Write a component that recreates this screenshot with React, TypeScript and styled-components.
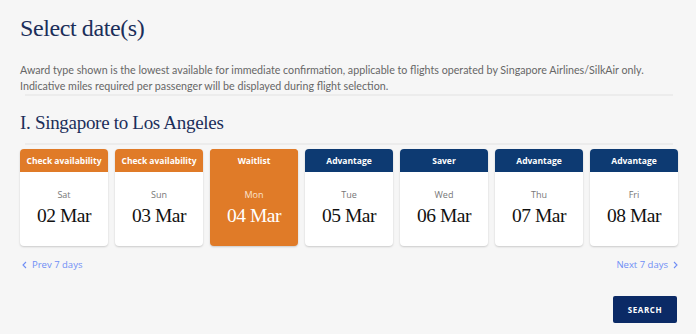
import React from "react";
import styled, { createGlobalStyle } from "styled-components";

const Global = createGlobalStyle`
  html, body { margin: 0; padding: 0; background: #f6f6f6; }
  body { font-family: "Lato", "Liberation Sans", sans-serif; }
`;

const Page = styled.div`
  width: 696px;
  height: 334px;
  box-sizing: border-box;
  padding: 13px 18px 0 20px;
  display: flex;
  flex-direction: column;
  overflow: hidden;
`;

const Title = styled.h1`
  margin: 0;
  font-family: "Liberation Serif", serif;
  font-weight: 400;
  font-size: 24px;
  line-height: 30px;
  letter-spacing: -0.4px;
  color: #1b2e5a;
`;

const Note = styled.p`
  margin: 19px 0 0;
  font-family: "Lato", sans-serif;
  font-size: 10.7px;
  line-height: 16px;
  color: #666;
  white-space: nowrap;
`;

const Rule = styled.div<{ $gap?: number }>`
  height: 2px;
  margin: ${(p) => p.$gap ?? 0}px 5px 0 5px;
  background: #ececec;
`;

const Sub = styled.h2`
  margin: 15px 0 0;
  font-family: "Liberation Serif", serif;
  font-weight: 400;
  font-size: 19px;
  line-height: 24px;
  letter-spacing: -0.3px;
  color: #1b2e5a;
`;

const Row = styled.div`
  display: flex;
  gap: 7px;
  margin-top: 4px;
`;

const Card = styled.div<{ $active?: boolean }>`
  width: 88px;
  height: 97px;
  border-radius: 4px;
  overflow: hidden;
  background: ${(p) => (p.$active ? "#e07b28" : "#fff")};
  box-shadow: 0 1px 2px rgba(0, 0, 0, 0.18);
  display: flex;
  flex-direction: column;
`;

const Head = styled.div<{ $tone: "orange" | "navy" }>`
  height: 23px;
  background: ${(p) => (p.$tone === "orange" ? "#e07b28" : "#0d3a72")};
  color: #fff;
  font-family: "Open Sans", sans-serif;
  font-weight: 700;
  font-size: 8.5px;
  display: flex;
  align-items: center;
  justify-content: center;
`;

const Body = styled.div<{ $active?: boolean }>`
  flex: 1;
  display: flex;
  flex-direction: column;
  align-items: center;
  padding-top: 17px;
  color: ${(p) => (p.$active ? "#fff" : "#111")};
`;

const Day = styled.div<{ $active?: boolean }>`
  font-family: "Open Sans", sans-serif;
  font-size: 9px;
  line-height: 12px;
  color: ${(p) => (p.$active ? "#fbe3cf" : "#777")};
`;

const DateText = styled.div`
  font-family: "Liberation Serif", serif;
  font-size: 19.5px;
  line-height: 24px;
  margin-top: 3px;
  letter-spacing: -0.5px;
`;

const Nav = styled.div`
  display: flex;
  justify-content: space-between;
  margin-top: 12px;
  padding: 0 0 0 2px;
`;

const NavLink = styled.a`
  font-family: "Open Sans", sans-serif;
  font-size: 9.5px;
  line-height: 14px;
  color: #6f8ef5;
  display: flex;
  align-items: center;
  gap: 5px;
  text-decoration: none;
`;

const Footer = styled.div`
  display: flex;
  justify-content: flex-end;
  margin-top: 24px;
  padding-right: 1px;
`;

const SearchBtn = styled.button`
  width: 64px;
  height: 27px;
  border: none;
  border-radius: 2px;
  background: #0b2a66;
  color: #fff;
  font-family: "Open Sans", sans-serif;
  font-weight: 700;
  font-size: 8px;
  letter-spacing: 0.6px;
  padding: 0;
`;

const Chevron = ({ dir }: { dir: "left" | "right" }) => (
  <svg width="5" height="8" viewBox="0 0 5 8">
    <path
      d={dir === "left" ? "M4 1 L1 4 L4 7" : "M1 1 L4 4 L1 7"}
      fill="none"
      stroke="#6f8ef5"
      strokeWidth="1.1"
    />
  </svg>
);

const days = [
  { label: "Check availability", tone: "orange", day: "Sat", date: "02 Mar" },
  { label: "Check availability", tone: "orange", day: "Sun", date: "03 Mar" },
  { label: "Waitlist", tone: "orange", day: "Mon", date: "04 Mar", active: true },
  { label: "Advantage", tone: "navy", day: "Tue", date: "05 Mar" },
  { label: "Saver", tone: "navy", day: "Wed", date: "06 Mar" },
  { label: "Advantage", tone: "navy", day: "Thu", date: "07 Mar" },
  { label: "Advantage", tone: "navy", day: "Fri", date: "08 Mar" },
] as const;

export default function App() {
  return (
    <>
      <Global />
      <Page>
        <Title>Select date(s)</Title>
        <Note>
          Award type shown is the lowest available for immediate confirmation, applicable to flights operated by Singapore Airlines/SilkAir only.
          <br />
          Indicative miles required per passenger will be displayed during flight selection.
        </Note>
        <Rule />
        <Sub>I. Singapore to Los Angeles</Sub>
        <Rule $gap={8} />
        <Row>
          {days.map((d, i) => {
            const active = "active" in d && d.active;
            return (
              <Card key={i} $active={active}>
                <Head $tone={d.tone}>{d.label}</Head>
                <Body $active={active}>
                  <Day $active={active}>{d.day}</Day>
                  <DateText>{d.date}</DateText>
                </Body>
              </Card>
            );
          })}
        </Row>
        <Nav>
          <NavLink>
            <Chevron dir="left" />
            Prev 7 days
          </NavLink>
          <NavLink>
            Next 7 days
            <Chevron dir="right" />
          </NavLink>
        </Nav>
        <Footer>
          <SearchBtn>SEARCH</SearchBtn>
        </Footer>
      </Page>
    </>
  );
}
